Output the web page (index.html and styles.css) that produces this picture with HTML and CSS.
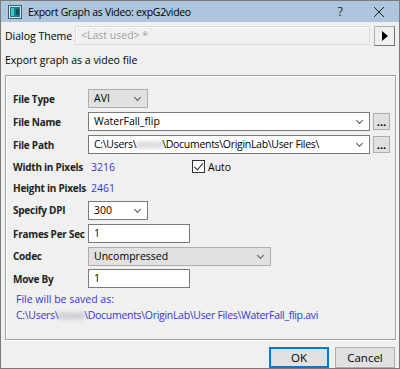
FILE: index.html
```html
<!DOCTYPE html>
<html lang="en">
  <head>
    <meta charset="UTF-8" />
    <title>Export Graph as Video</title>
    <link rel="stylesheet" href="styles.css">
  </head>
  <body>
    <div class="window">
      <div class="titlebar">
        <svg class="app-icon" width="14" height="14" viewBox="0 0 14 14">
          <rect x="0.5" y="0.5" width="13" height="13" fill="#d8e4ec" stroke="#4a5a66" />
          <rect x="2" y="2" width="10" height="10" fill="#1c7e8c" />
          <rect x="3" y="3" width="3" height="8" fill="#3fc8c0" />
          <rect x="8" y="4" width="3" height="6" fill="#0f4d60" />
        </svg>
        <span class="title">Export Graph as Video: expG2video</span>
        <span class="help">?</span>
        <svg class="close" width="12" height="12" viewBox="0 0 12 12">
          <path d="M1 1 L11 11 M11 1 L1 11" stroke="#222" stroke-width="1" />
        </svg>
      </div>

      <div class="content">
        <div class="theme-row">
          <span class="theme-label">Dialog Theme</span>
          <div class="theme-box">&lt;Last used&gt; *</div>
          <button class="arrow-btn">
            <svg width="6" height="10" viewBox="0 0 6 10"><path d="M0 0 L6 5 L0 10 Z" fill="#000" /></svg>
          </button>
        </div>
        <div class="caption">Export graph as a video file</div>

        <div class="group">
          <div class="row r23">
            <span class="label">File Type</span>
            <div class="select gray w60">AVI<span class="chev"></span></div>
          </div>
          <div class="row r23">
            <span class="label">File Name</span>
            <div class="select white wide">WaterFall_flip<span class="chev"></span></div>
            <button class="dots">...</button>
          </div>
          <div class="row r23">
            <span class="label">File Path</span>
            <div class="select white wide path">C:\Users\<span class="blur">xxxxx</span>\Documents\OriginLab\User Files\<span class="chev"></span></div>
            <button class="dots">...</button>
          </div>
          <div class="row r21">
            <span class="label">Width in Pixels</span>
            <span class="value">3216</span>
            <label class="auto"><span class="check"></span>Auto</label>
          </div>
          <div class="row r21">
            <span class="label">Height in Pixels</span>
            <span class="value">2461</span>
          </div>
          <div class="row r24">
            <span class="label">Specify DPI</span>
            <div class="select white w60">300<span class="chev"></span></div>
          </div>
          <div class="row r23">
            <span class="label">Frames Per Sec</span>
            <div class="input w102">1</div>
          </div>
          <div class="row r22">
            <span class="label">Codec</span>
            <div class="select gray w183">Uncompressed<span class="chev"></span></div>
          </div>
          <div class="row r23">
            <span class="label">Move By</span>
            <div class="input w102">1</div>
          </div>
          <div class="saved">
            <div>File will be saved as:</div>
            <div class="path">C:\Users\<span class="blur">xxxxx</span>\Documents\OriginLab\User Files\WaterFall_flip.avi</div>
          </div>
        </div>

        <div class="buttons">
          <button class="btn default">OK</button>
          <button class="btn">Cancel</button>
        </div>
      </div>
    </div>
  </body>
</html>
```

FILE: styles.css
```css
* {
  margin: 0;
  padding: 0;
  box-sizing: border-box;
}

body {
  font-family: 'Open Sans', 'Noto Sans', sans-serif;
  font-size: 10.5px;
  color: #000;
  background: #f0f0f0;
}

.window {
  width: 400px;
  height: 369px;
  border: 1px solid #7a7a7a;
  background: #f0f0f0;
  display: flex;
  flex-direction: column;
}

.titlebar {
  height: 26px;
  background: #adc6de;
  display: flex;
  align-items: center;
  padding-left: 7px;
}

.app-icon {
  margin-right: 6px;
}

.title {
  font-size: 10.5px;
  letter-spacing: -0.3px;
  flex: 1;
  white-space: nowrap;
}

.help {
  font-size: 12px;
  margin-right: 30px;
  color: #222;
}

.close {
  margin-right: 14px;
}

.content {
  flex: 1;
  display: flex;
  flex-direction: column;
  padding: 3px 3px 0 3px;
}

.theme-row {
  display: flex;
  align-items: center;
  height: 21px;
}

.theme-label {
  width: 71px;
  flex-shrink: 0;
  padding-left: 1px;
  white-space: nowrap;
}

.theme-box {
  width: 295px;
  height: 19px;
  border: 1px solid #dcdcdc;
  background: #f0f0f0;
  color: #a0a0a0;
  padding: 1px 5px;
  box-shadow: inset 1px 1px 0 #fff;
}

.arrow-btn {
  margin-left: 4px;
  width: 21px;
  height: 20px;
  border: 1px solid #adadad;
  border-right-color: #707070;
  border-bottom-color: #707070;
  background: #f0f0f0;
  display: flex;
  align-items: center;
  justify-content: center;
}

.caption {
  margin-top: 7px;
  padding-left: 1px;
  height: 16px;
}

.group {
  margin-top: 6px;
  margin-left: 1px;
  width: 391px;
  height: 265px;
  border: 1px solid #a0a0a0;
  box-shadow: inset 1px 1px 0 #fff, 1px 1px 0 #fff;
  padding: 11px 0 0 7px;
}

.row {
  display: flex;
  align-items: center;
}

.r21 { height: 21px; }
.r22 { height: 22px; }
.r23 { height: 23px; }
.r24 { height: 24px; }

.label {
  width: 75px;
  flex-shrink: 0;
  font-size: 10px;
  font-weight: bold;
  letter-spacing: -0.25px;
  white-space: nowrap;
  color: #222;
}

.select,
.input {
  height: 19px;
  border: 1px solid #7a7a7a;
  background: #fff;
  padding: 1px 5px;
  position: relative;
  white-space: nowrap;
  flex-shrink: 0;
}

.select.gray {
  background: #e1e1e1;
  border-color: #adadad;
}

.chev {
  position: absolute;
  right: 7px;
  top: 5px;
  width: 5px;
  height: 5px;
  border-right: 1px solid #555;
  border-bottom: 1px solid #555;
  transform: rotate(45deg);
}

.w60 { width: 60px; }
.w102 { width: 102px; }
.w183 { width: 183px; }
.wide { width: 282px; }

.path {
  letter-spacing: -0.3px;
}

.dots {
  margin-left: 3px;
  width: 17px;
  height: 17px;
  border: 1px solid #adadad;
  background: #e1e1e1;
  font-family: inherit;
  font-size: 11px;
  line-height: 8px;
  font-weight: bold;
}

.blur {
  color: transparent;
  text-shadow: 0 0 4px rgba(110, 110, 130, 0.8);
}

.value {
  color: #3636d8;
  padding-left: 3px;
  width: 104px;
}

.auto {
  display: flex;
  align-items: center;
}

.check {
  width: 13px;
  height: 13px;
  border: 1px solid #333;
  background: #fff;
  margin-right: 3px;
  position: relative;
}

.check::after {
  content: '';
  position: absolute;
  left: 3px;
  top: 0px;
  width: 4px;
  height: 8px;
  border-right: 1px solid #222;
  border-bottom: 1px solid #222;
  transform: rotate(40deg);
}

.saved {
  color: #3636d8;
  margin-top: 1px;
  padding-left: 3px;
  line-height: 16px;
  white-space: nowrap;
}

.buttons {
  display: flex;
  justify-content: flex-end;
  gap: 6px;
  margin-top: 7px;
  padding-right: 1px;
}

.btn {
  width: 60px;
  height: 21px;
  border: 1px solid #adadad;
  background: #e1e1e1;
  font-family: inherit;
  font-size: 11.5px;
}

.btn.default {
  border: 2px solid #0078d7;
}
```
